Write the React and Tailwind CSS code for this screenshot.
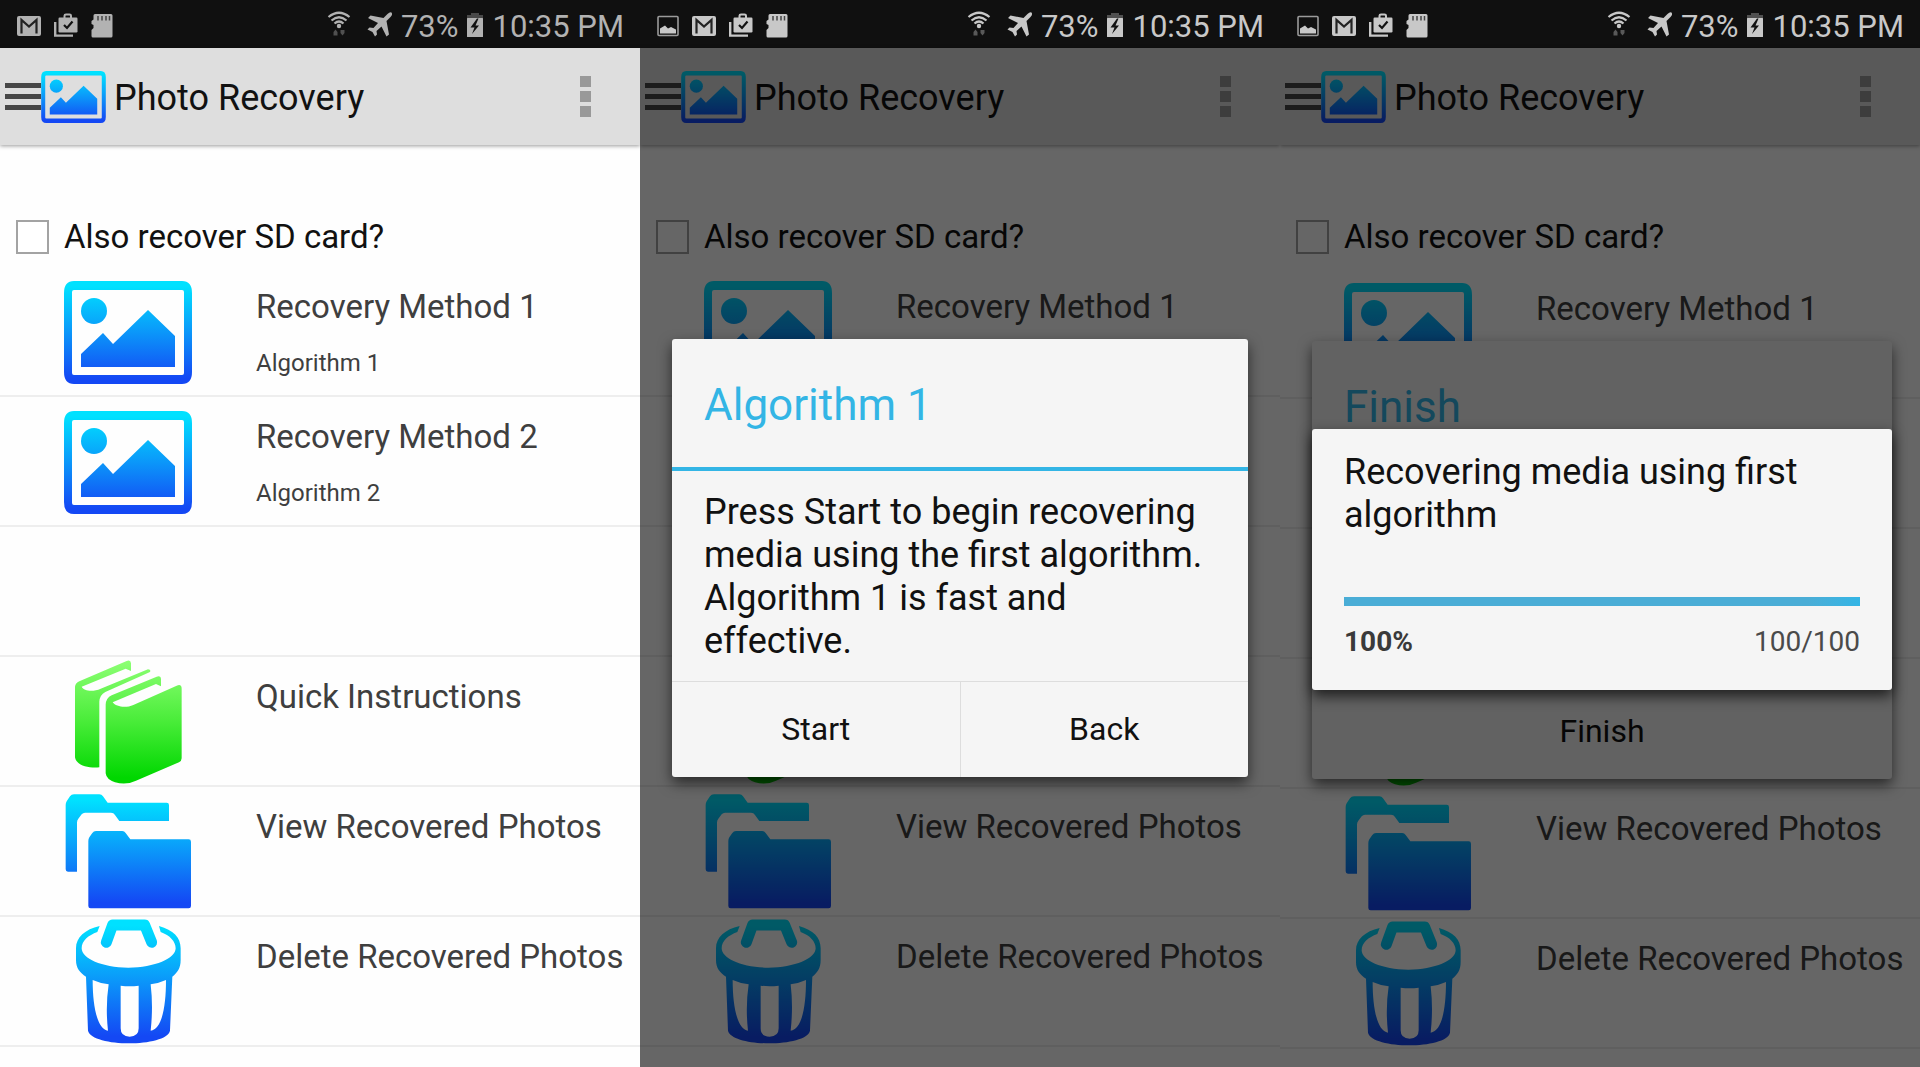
import { useId } from "react";

function BlueGradient({ id, top, bottom }) {
  return (
    <linearGradient id={id} gradientUnits="userSpaceOnUse" x1="0" y1={top} x2="0" y2={bottom}>
      <stop offset="0.05" stopColor="#00e1ff" />
      <stop offset="0.45" stopColor="#0a9ffa" />
      <stop offset="0.95" stopColor="#1448f4" />
    </linearGradient>
  );
}

function PhotoShape({ fill }) {
  return (
    <g fill={fill}>
      <path
        fillRule="evenodd"
        d="M10 14H118Q128 14 128 26V105Q128 117 118 117H10Q0 117 0 105V26Q0 14 10 14ZM10 23Q8 23 8 25V106Q8 108 10 108H118Q120 108 120 106V25Q120 23 118 23Z"
      />
      <circle cx="30" cy="44" r="13" />
      <path d="M17 87L39 66L49 77L84 43L111 69V100H17Z" />
    </g>
  );
}

function LogoIcon() {
  const id = useId();
  return (
    <svg viewBox="0 14 128 103" className="h-[52px] w-[65px]" aria-hidden="true">
      <defs>
        <BlueGradient id={id} top="14" bottom="117" />
      </defs>
      <PhotoShape fill={`url(#${id})`} />
    </svg>
  );
}

function PhotoIcon() {
  const id = useId();
  return (
    <svg viewBox="0 0 128 129" className="h-[129px] w-32" aria-hidden="true">
      <defs>
        <BlueGradient id={id} top="14" bottom="117" />
      </defs>
      <PhotoShape fill={`url(#${id})`} />
    </svg>
  );
}

function BooksIcon() {
  const id = useId();
  return (
    <svg viewBox="0 0 128 129" className="h-[129px] w-32" aria-hidden="true">
      <defs>
        <linearGradient id={id} gradientUnits="userSpaceOnUse" x1="0" y1="62" x2="0" y2="432">
          <stop offset="0" stopColor="#8dff74" />
          <stop offset="0.5" stopColor="#48ec38" />
          <stop offset="0.95" stopColor="#00d700" />
        </linearGradient>
      </defs>
      <g transform="translate(-4 -17) scale(0.3333)" fill={`url(#${id})`}>
        <path d="M45 140Q46 130 58 124L200 63Q212 58 213 70V93L197 86L65 140C72 154 100 156 122 146L264 88Q274 89 270 96L136 156Q119 165 118 185V382C85 385 48 376 45 352Z" />
        <path d="M137 194Q138 174 155 166L290 110Q303 106 303 118V139L288 132L158 187C168 201 198 205 220 195L350 137Q365 131 365 146V355Q365 363 357 367L228 422Q200 436 165 427Q139 418 137 400Z" />
      </g>
    </svg>
  );
}

function FoldersIcon() {
  const id = useId();
  return (
    <svg viewBox="0 0 128 129" className="h-[129px] w-32" aria-hidden="true">
      <defs>
        <BlueGradient id={id} top="463" bottom="805" />
      </defs>
      <g transform="translate(-4 -147) scale(0.3333)" fill={`url(#${id})`}>
        <path d="M17 495Q17 489 20 484L30 469Q34 463 42 463H118Q125 463 129 469L143 488H320Q327 488 327 495V543H178L165 525Q161 518 153 518H75Q69 518 65 523L55 536Q51 541 51 548V695H24Q17 695 17 688Z" />
        <path d="M85 603Q85 597 88 592L97 579Q101 573 108 573H187Q193 573 197 579L211 598H386Q393 598 393 605V798Q393 805 386 805H92Q85 805 85 798Z" />
      </g>
    </svg>
  );
}

function TrashIcon() {
  const id = useId();
  return (
    <svg viewBox="0 0 128 129" className="h-[129px] w-32" aria-hidden="true">
      <defs>
        <BlueGradient id={id} top="838" bottom="1208" />
      </defs>
      <g transform="translate(-4 -277) scale(0.3333)">
        <path
          d="M139 907L158 855H254L275 907"
          fill="none"
          stroke={`url(#${id})`}
          strokeWidth="33"
          strokeLinecap="round"
          strokeLinejoin="round"
        />
        <path
          fill={`url(#${id})`}
          fillRule="evenodd"
          d="M119 858C75 868 48 892 48 925V960C48 985 60 998 78 1010L84 1172C90 1197 150 1210 207 1210C265 1210 325 1197 330 1172L337 1010C352 998 362 985 362 960V925C362 892 340 870 297 858L302 876C330 886 347 905 347 925C347 955 285 983 205 983C125 983 65 955 65 925C65 902 85 886 112 876ZM98 1020Q120 1030 146 1033Q136 1100 144 1172C112 1168 98 1100 98 1020ZM182 1037Q209 1040 236 1037V1165Q236 1190 209 1190Q182 1190 182 1165ZM318 1020C318 1100 306 1168 272 1172Q280 1100 272 1033Q296 1030 318 1020Z"
        />
      </g>
    </svg>
  );
}

function GalleryStatusIcon() {
  return (
    <svg viewBox="0 0 22 48" className="h-12 w-[22px]" aria-hidden="true">
      <rect x="1" y="16.500" width="20" height="19" rx="1" fill="none" stroke="currentColor" strokeWidth="1.6" opacity="0.75" />
      <path d="M3 33.500V28.500L8 25.500L11 28.500L14 27L19 29.500V33.500Z" fill="currentColor" />
    </svg>
  );
}

function MailStatusIcon() {
  return (
    <svg viewBox="0 0 24 48" className="h-12 w-6" aria-hidden="true">
      <rect x="0" y="16" width="24" height="20" rx="2" fill="currentColor" />
      <path d="M4.500 33.500V20L12 26.500L19.500 20V33.500" fill="none" stroke="#222222" strokeWidth="2.2" />
    </svg>
  );
}

function StoreStatusIcon() {
  return (
    <svg viewBox="0 0 24 48" className="h-12 w-6" aria-hidden="true">
      <path d="M1.2 22V35.6H19" fill="none" stroke="currentColor" strokeWidth="2.4" />
      <path d="M10.500 18V15.800Q10.500 14.500 12 14.500H15.500Q17 14.500 17 15.800V18" fill="none" stroke="currentColor" strokeWidth="2" />
      <rect x="4.500" y="17.500" width="19" height="15" rx="1.200" fill="currentColor" />
      <path d="M10 25L13 28L18.500 21.500" fill="none" stroke="#111111" strokeWidth="2.2" />
    </svg>
  );
}

function CardStatusIcon() {
  return (
    <svg viewBox="0 0 22 48" className="h-12 w-[22px]" aria-hidden="true">
      <path d="M4 14H20Q21.500 14 21.500 15.500V36Q21.500 37.500 20 37.500H2Q0.500 37.500 0.500 36V30L2.500 28V25L0.500 24V21L2.500 19.500V15.500Q2.500 14 4 14Z" fill="currentColor" />
      <path d="M7 16V20.500M11 16V20.500M15 16V20.500M18.500 16V20.500" stroke="#444444" strokeWidth="1.5" />
    </svg>
  );
}

function WifiStatusIcon() {
  return (
    <svg viewBox="0 0 24 48" className="h-12 w-6" aria-hidden="true">
      <g fill="none" stroke="currentColor" strokeWidth="2.2">
        <path d="M1.500 17Q12 8.500 22.500 17" />
        <path d="M4.500 20.500Q12 14 19.500 20.500" />
        <path d="M7.500 23.500Q12 19.500 16.500 23.500" />
      </g>
      <circle cx="12" cy="26" r="2.2" fill="currentColor" />
      <path d="M6.500 32L8.500 29.500L10.500 32V35.500H6.500ZM13.500 30H17.500V33L15.500 35.500L13.500 33Z" fill="currentColor" opacity="0.4" />
    </svg>
  );
}

function PlaneStatusIcon() {
  return (
    <svg viewBox="0 0 26 48" className="h-12 w-[26px]" aria-hidden="true">
      <path
        d="M24.500 12.500Q26 14.500 23.500 17L19.500 21L22 34.500L19.500 36.500L14.500 26.500L9.500 31L10 34.500L8 36.500L5.500 32L0.500 29.500L2.500 27.500L6.500 28L11 23L1 18L3.500 15.500L16.500 18L20.500 14Q23 11.500 24.500 12.500Z"
        fill="currentColor"
      />
    </svg>
  );
}

function BatteryStatusIcon() {
  return (
    <svg viewBox="0 0 18 48" className="h-12 w-[18px]" aria-hidden="true">
      <path d="M5 13H13V15H17V19H1V15H5Z" fill="currentColor" opacity="0.35" />
      <rect x="1" y="18" width="16" height="19" rx="0.500" fill="currentColor" />
      <path d="M11 18.500L4.500 27.500H8.500L6 34L13 25.500H9.500L12.500 18.500Z" fill="#111111" />
    </svg>
  );
}

function StatusBar({ withGallery, tone }) {
  return (
    <div className={`flex h-12 items-center justify-between bg-[#101010] pl-[17px] pr-4 ${tone}`}>
      <div className="flex gap-[13px]">
        {withGallery && <GalleryStatusIcon />}
        <MailStatusIcon />
        <StoreStatusIcon />
        <CardStatusIcon />
      </div>
      <div className="flex items-center">
        <WifiStatusIcon />
        <span className="ml-4 flex">
          <PlaneStatusIcon />
        </span>
        <span className="ml-2 pt-1.5 text-[31px] leading-10">73%</span>
        <span className="ml-2 flex">
          <BatteryStatusIcon />
        </span>
        <time className="ml-2 pt-1.5 text-[31px] leading-10">10:35 PM</time>
      </div>
    </div>
  );
}

function AppBar() {
  return (
    <header className="flex h-[97px] items-center bg-[#dedede] shadow-[0_1px_4px_rgba(0,0,0,0.4)]">
      <button type="button" aria-label="Open menu" className="ml-[5px] flex w-9 flex-col gap-[6px]">
        <span className="h-[5px] bg-[#474747]" />
        <span className="h-[5px] bg-[#474747]" />
        <span className="h-[5px] bg-[#474747]" />
      </button>
      <LogoIcon />
      <h1 className="ml-2 pt-[3px] text-4xl leading-[43px] text-[#111111]">Photo Recovery</h1>
      <button type="button" aria-label="More options" className="ml-auto mr-[49px] flex flex-col gap-1">
        <span className="size-[11px] bg-[#999999]" />
        <span className="size-[11px] bg-[#999999]" />
        <span className="size-[11px] bg-[#999999]" />
      </button>
    </header>
  );
}

const MENU = [
  { title: "Recovery Method 1", note: "Algorithm 1", Icon: PhotoIcon },
  { title: "Recovery Method 2", note: "Algorithm 2", Icon: PhotoIcon },
  null,
  { title: "Quick Instructions", Icon: BooksIcon },
  { title: "View Recovered Photos", Icon: FoldersIcon },
  { title: "Delete Recovered Photos", Icon: TrashIcon },
];

function MainScreen({ optionPad }) {
  const checkId = useId();
  return (
    <>
      <AppBar />
      <div className={`flex items-center pl-4 pt-18 ${optionPad}`}>
        <input
          id={checkId}
          type="checkbox"
          className="h-[34px] w-[33px] appearance-none border-2 border-[#a3a3a3] bg-white"
        />
        <label htmlFor={checkId} className="ml-[15px] text-[33px] leading-10 text-[#111111]">
          Also recover SD card?
        </label>
      </div>
      <ul>
        {MENU.map((item, i) => (
          <li key={i} className="h-[130px] overflow-hidden border-b-2 border-[#eeeeee]">
            {item && (
              <button type="button" className="flex w-full items-start pl-16 text-left text-[#3f3f3f]">
                <item.Icon />
                <span className="ml-16 flex flex-col whitespace-nowrap pt-5">
                  <span className="text-[33px] leading-10">{item.title}</span>
                  {item.note && <span className="mt-5 text-2xl leading-8">{item.note}</span>}
                </span>
              </button>
            )}
          </li>
        ))}
      </ul>
    </>
  );
}

function Phone({ withGallery, tone, optionPad, children }) {
  return (
    <section className="flex min-h-screen flex-col overflow-hidden bg-[#fefefe]">
      <StatusBar withGallery={withGallery} tone={tone} />
      <div className="relative flex-1">
        <MainScreen optionPad={optionPad} />
        {children}
      </div>
    </section>
  );
}

function Dialog({ title, message, actions }) {
  return (
    <div
      role="dialog"
      aria-label={title}
      className="w-full rounded-[3px] bg-[#f5f5f5] shadow-[0_6px_14px_rgba(0,0,0,0.6)]"
    >
      <h2 className="border-b-4 border-[#33b5e5] px-8 pb-[34px] pt-[38px] text-[44px] leading-14 text-[#33b5e5]">
        {title}
      </h2>
      <p className="min-h-[210px] px-8 pb-4 pt-5 text-4xl leading-[43px] text-[#111111]">{message}</p>
      <div className="flex divide-x divide-[#dddddd] border-t border-[#dddddd]">
        {actions.map((action) => (
          <button key={action} type="button" className="flex-1 py-[26px] text-[32px] leading-[43px] text-[#111111]">
            {action}
          </button>
        ))}
      </div>
    </div>
  );
}

function ProgressDialog() {
  return (
    <div
      role="dialog"
      aria-label="Recovery progress"
      className="w-full rounded-[3px] bg-[#f5f5f5] px-8 pb-8 pt-[22px] shadow-[0_6px_14px_rgba(0,0,0,0.7)]"
    >
      <p className="text-4xl leading-[43px] text-[#111111]">Recovering media using first algorithm</p>
      <progress
        value={100}
        max={100}
        aria-label="Recovered"
        className="mt-[60px] block h-[9px] w-full appearance-none [&::-webkit-progress-bar]:bg-[#cccccc] [&::-webkit-progress-value]:bg-linear-to-r [&::-webkit-progress-value]:from-[#4aadd6] [&::-webkit-progress-value]:from-90% [&::-webkit-progress-value]:to-[#33b5e5]"
      />
      <div className="mt-5 flex justify-between text-[28px] leading-8 text-[#4a4a4a]">
        <span className="font-bold text-[#3a3a3a]">100%</span>
        <span>100/100</span>
      </div>
    </div>
  );
}

export default function App() {
  return (
    <main className="grid min-h-screen grid-cols-3 font-['Roboto','Liberation_Sans',sans-serif]">
      <Phone tone="text-[#b2b2b2]" optionPad="pb-2.5" />

      <Phone withGallery tone="text-[#c8c8c8]" optionPad="pb-2.5">
        <div className="absolute inset-0 flex items-center bg-black/60 px-8">
          <Dialog
            title="Algorithm 1"
            message="Press Start to begin recovering media using the first algorithm. Algorithm 1 is fast and effective."
            actions={["Start", "Back"]}
          />
        </div>
      </Phone>

      <Phone withGallery tone="text-[#c8c8c8]" optionPad="pb-3">
        <div className="absolute inset-0 flex items-center pl-8 pr-7 pt-1">
          <Dialog title="Finish" actions={["Finish"]} />
        </div>
        <div className="absolute inset-0 flex items-center bg-black/60 pl-8 pr-7 pt-1">
          <ProgressDialog />
        </div>
      </Phone>
    </main>
  );
}
